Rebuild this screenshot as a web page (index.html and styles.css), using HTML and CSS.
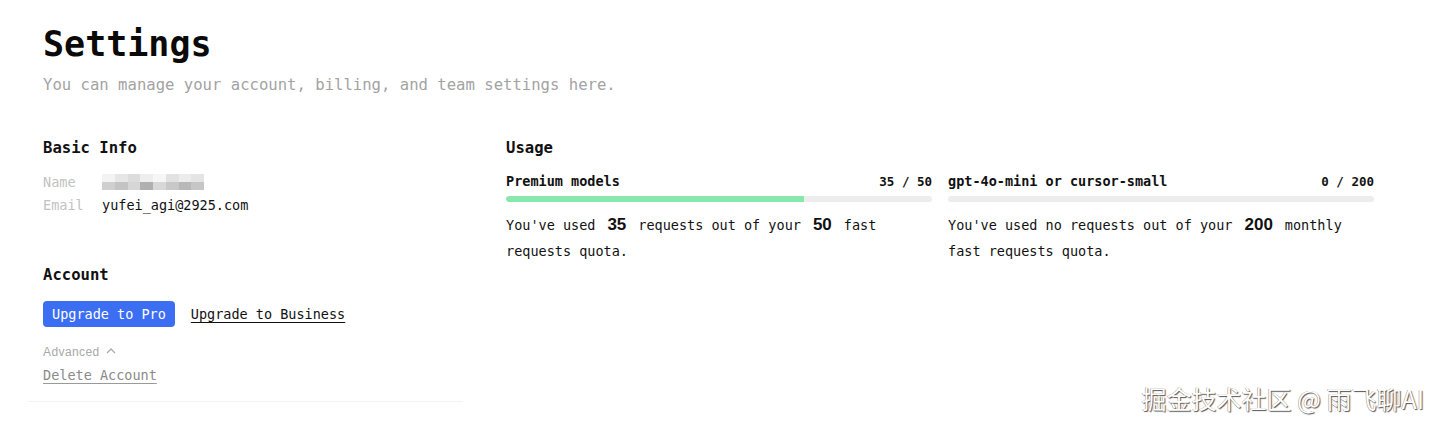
FILE: index.html
```html
<!DOCTYPE html>
<html>
<head>
<meta charset="utf-8">
<link rel="stylesheet" href="styles.css">
</head>
<body>
<main class="page">
  <header class="head">
    <h1 class="title">Settings</h1>
    <p class="subtitle">You can manage your account, billing, and team settings here.</p>
  </header>
  <div class="columns">
    <section class="left">
      <h2 class="section-title">Basic Info</h2>
      <div class="info">
        <div class="info-row">
          <span class="info-label">Name</span>
          <span class="blur">
            <span class="blur-row top"><i style="background:#f3f3f3"></i><i style="background:#e6e6e6"></i><i style="background:#dcdcdc"></i><i style="background:#eee"></i><i style="background:#f6f6f6"></i><i style="background:#e2e2e2"></i><i style="background:#ececec"></i><i style="background:#e4e4e4"></i></span>
            <span class="blur-row bottom"><i style="background:#cfcfcf"></i><i style="background:#c4c4c4"></i><i style="background:#d6d6d6"></i><i style="background:#b0b0b0"></i><i style="background:#d8d8d8"></i><i style="background:#c8c8c8"></i><i style="background:#b8b8b8"></i><i style="background:#c6c6c6"></i></span>
          </span>
        </div>
        <div class="info-row">
          <span class="info-label">Email</span>
          <span class="info-value">yufei_agi@2925.com</span>
        </div>
      </div>

      <h2 class="section-title account-title">Account</h2>
      <div class="actions">
        <button class="btn-primary">Upgrade to Pro</button>
        <a class="link" href="#">Upgrade to Business</a>
      </div>
      <div class="advanced">Advanced
        <svg class="chev" width="10" height="7" viewBox="0 0 10 7"><path d="M1 6 L5 2 L9 6" fill="none" stroke="#aaa" stroke-width="1.3"/></svg>
      </div>
      <a class="delete" href="#">Delete Account</a>
      <div class="divider"></div>
    </section>

    <section class="right">
      <h2 class="section-title">Usage</h2>
      <div class="cards">
        <div class="card">
          <div class="card-head"><span>Premium models</span><span>35 / 50</span></div>
          <div class="track"><div class="fill" style="width:70%"></div></div>
          <p class="desc">You've used<b class="num">35</b>requests out of your<b class="num">50</b>fast requests quota.</p>
        </div>
        <div class="card">
          <div class="card-head"><span>gpt-4o-mini or cursor-small</span><span>0 / 200</span></div>
          <div class="track"><div class="fill" style="width:0%"></div></div>
          <p class="desc">You've used no requests out of your<b class="num">200</b>monthly fast requests quota.</p>
        </div>
      </div>
    </section>
  </div>
  <div class="watermark">掘金技术社区 @ 雨飞聊AI</div>
</main>
</body>
</html>
```

FILE: styles.css
```css
* { box-sizing: border-box; }
html, body { margin: 0; padding: 0; background: #fff; }
body {
  font-family: "DejaVu Sans Mono", "Liberation Mono", monospace;
  color: #111;
  width: 1440px;
  height: 428px;
  overflow: hidden;
}
.page {
  position: relative;
  height: 428px;
  padding: 24px 0 0 43px;
}
.title {
  margin: 0;
  font-size: 35px;
  line-height: 40px;
  font-weight: 600;
  color: #0a0a0a;
}
.subtitle {
  margin: 9px 0 0;
  font-size: 15.6px;
  line-height: 24px;
  color: #a3a3a3;
}
.columns {
  display: grid;
  grid-template-columns: 420px 868px;
  column-gap: 43px;
  margin-top: 39px;
}
.section-title {
  margin: 0;
  font-size: 15.6px;
  line-height: 24px;
  font-weight: 600;
  color: #111;
}
.info { margin-top: 10px; }
.info-row {
  display: flex;
  align-items: center;
  height: 23px;
  font-size: 13.5px;
}
.info-label { width: 59px; color: #c2c2c2; }
.info-value { color: #111; }
.blur { display: flex; flex-direction: column; width: 102px; }
.blur-row { display: flex; height: 8px; }
.blur-row i { flex: 1; display: block; }
.account-title { margin-top: 47px; }
.actions {
  display: flex;
  align-items: center;
  gap: 16px;
  margin-top: 14px;
}
.btn-primary {
  height: 26px;
  padding: 0 9px;
  border: 0;
  border-radius: 4px;
  background: #3b6ef2;
  color: #fff;
  font-family: inherit;
  font-size: 13.5px;
  cursor: pointer;
}
.link {
  color: #111;
  font-size: 13.5px;
  text-decoration: underline;
  text-underline-offset: 3px;
}
.advanced {
  display: flex;
  align-items: center;
  gap: 6px;
  margin-top: 16px;
  height: 18px;
  font-family: "Liberation Sans", Arial, sans-serif;
  font-size: 12px;
  color: #a8a8a8;
  letter-spacing: 0.4px;
}
.chev { margin-top: -3px; }
.delete {
  display: inline-block;
  margin-top: 4px;
  line-height: 20px;
  font-size: 13.5px;
  color: #8a8a8a;
  text-decoration: underline;
  text-decoration-color: #9a9a9a;
  text-underline-offset: 3px;
}
.divider {
  margin: 16px 0 0 -15px;
  height: 1px;
  background: #f3f3f3;
}
.cards {
  display: grid;
  grid-template-columns: 1fr 1fr;
  column-gap: 16px;
  margin-top: 11px;
}
.card-head {
  display: flex;
  justify-content: space-between;
  align-items: center;
  height: 20px;
  font-size: 13.5px;
  font-weight: 600;
}
.card-head span:last-child { font-size: 12.5px; }
.track {
  margin-top: 5px;
  height: 6px;
  border-radius: 3px;
  background: #ededed;
  overflow: hidden;
}
.fill { height: 100%; background: #86e8ab; border-radius: 3px 0 0 3px; }
.desc {
  margin: 10px 0 0;
  font-size: 13.5px;
  line-height: 26px;
  color: #111;
}
.num {
  display: inline-block;
  font-family: "Liberation Sans", Arial, sans-serif;
  font-weight: 700;
  font-size: 17px;
  line-height: 1;
  margin: 0 12px;
}
.watermark {
  position: absolute;
  right: 16px;
  bottom: 15px;
  font-family: "Noto Sans CJK SC", "Liberation Sans", sans-serif;
  font-size: 25px;
  line-height: 30px;
  color: #fff;
  text-shadow: 1px 1px 1px #555, -0.5px -0.5px 0 #999;
}
```
